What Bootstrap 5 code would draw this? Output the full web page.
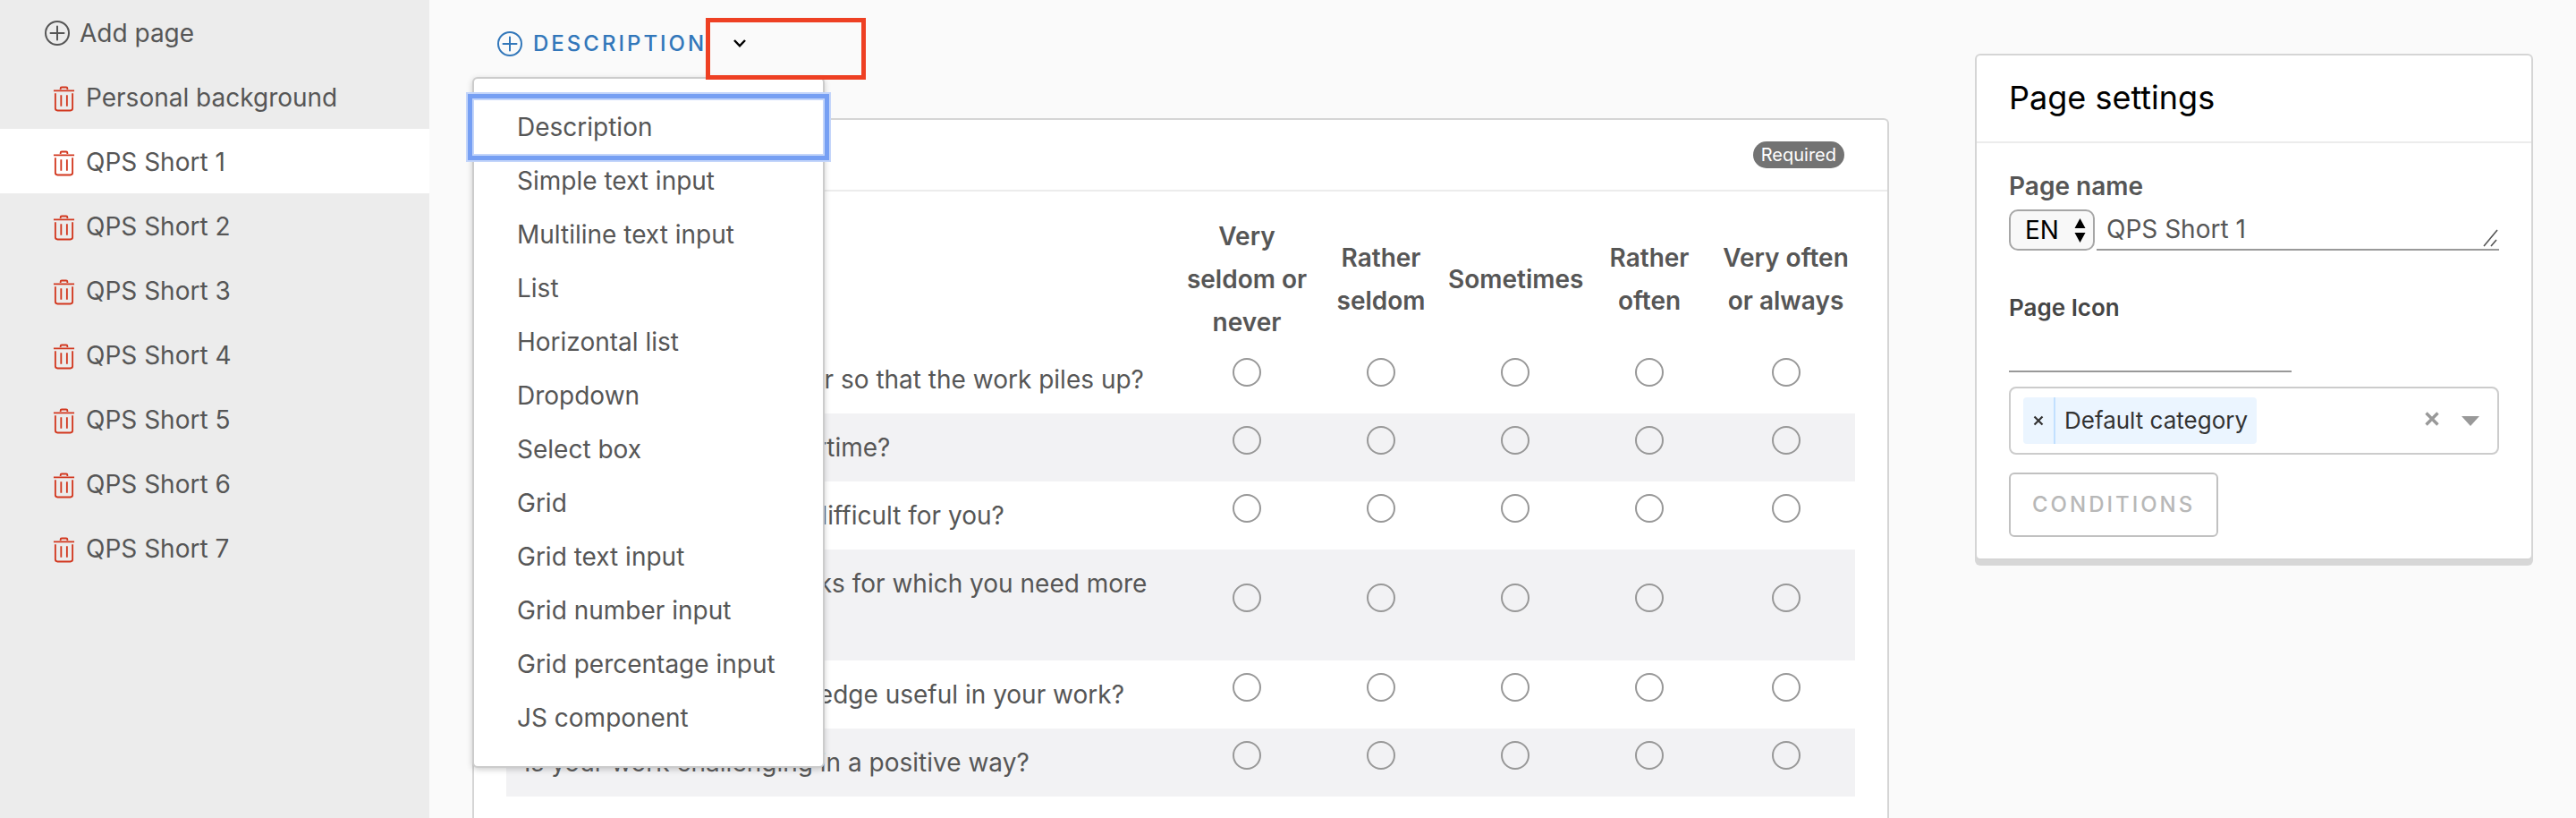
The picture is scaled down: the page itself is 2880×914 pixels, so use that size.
<!DOCTYPE html>
<html lang="en">
<head>
<meta charset="utf-8">
<meta name="viewport" content="width=device-width, initial-scale=1">
<title>Survey editor</title>
<link rel="stylesheet" href="https://cdn.jsdelivr.net/npm/bootstrap@5.3.0/dist/css/bootstrap.min.css">
<style>
  body { font-family: Inter, "Liberation Sans", sans-serif; font-size: 28px; line-height: 48px; color: #565656; background: #fafafa; }
  .app-shell { min-height: 100vh; }
  .page-nav { background: #ececec; }
  .nav-row { height: 72px; gap: 12px; padding-left: 59px; padding-top: 2px; color: #565656; text-decoration: none; }
  .nav-row.add-row { gap: 11px; padding-left: 50px; background: none; }
  .nav-row.active { background: #fff; }
  .trash-btn { color: #d2371e; margin-top: 2px; line-height: 0; }
  .work-area { flex: 1 1 0; min-width: 0; padding: 0 48px; gap: 96px; }
  .editor-col { flex: 1584 1 0; min-width: 0; }
  .settings-col { flex: 624 1 0; min-width: 0; padding-top: 60px; }
  .add-bar { height: 132px; padding: 25px 28px 0; }
  .add-btn { color: #3277ba; font-size: 24px; font-weight: 500; letter-spacing: 3px; line-height: 48px; gap: 12px; }
  .chev-btn { margin-left: 29px; line-height: 0; color: #000; }
  .mark-box { left: 261px; top: 20px; width: 179px; height: 69px; border: 5px solid #ee4023; z-index: 30; }
  .type-menu { top: 86px; left: 0; width: 394px; padding: 24px 0; border: 2px solid #ccc; border-radius: 6px; background: #fff; box-shadow: 0 2px 6px rgba(90,90,90,.3); z-index: 20; }
  .type-item { height: 60px; padding: 0 48px; color: #565656; line-height: 60px; font-size: 28px; }
  .type-item.is-focused { position: relative; border-radius: 2px; box-shadow: 0 0 0 2px #c3d5fa, 0 0 0 7px #769ff3, 0 0 0 9px #c3d5fa; }
  .panel { background: #fff; border: 2px solid #d5d5d5; border-radius: 6px; }
  .q-panel { border-bottom: 0; border-radius: 6px 6px 0 0; }
  .q-head { height: 80px; padding: 0 48px; border-bottom: 2px solid #ececec; }
  .req-pill { background: #737373; color: #fff; font-size: 20px; line-height: 30px; border-radius: 15px; padding: 0 9px; }
  .q-body { padding: 24px 36px; }
  .q-table { width: 100%; table-layout: fixed; }
  .q-table th, .q-table td { padding: 14px 0 14px 20px; vertical-align: middle; font-weight: 400; }
  .q-table thead th { padding: 2px 0; text-align: center; font-weight: 600; }
  .q-table tbody tr:nth-child(even) { background: #f2f2f4; }
  .q-table td { padding: 0 0 16px; text-align: center; line-height: 0; }
  .opt-col { width: 150px; }
  .opt-col-last { width: 155px; }
  .opt { appearance: none; width: 32px; height: 32px; margin: 0; border: 2px solid #989898; border-radius: 50%; background: #fff; vertical-align: top; }
  tr:nth-child(even) .opt { background: transparent; }
  .s-panel { box-shadow: 0 6px 0 #d7d7d7; }
  .s-head { height: 98px; padding: 0 36px; border-bottom: 2px solid #ececec; color: #000; font-size: 36px; font-weight: 400; }
  .s-body { padding: 24px 36px; }
  .lbl { font-weight: 600; }
  .name-row { margin-top: 2px; }
  .lbl-icon { font-size: 26px; color: #454545; margin-top: 40px; }
  .lang-wrap { width: 96px; margin-right: 2px; }
  .lang-select { appearance: none; width: 100%; height: 46px; border: 2px solid #a6a6a6; border-radius: 10px; background: #f8f8f8; color: #000; padding: 0 0 0 16px; line-height: 42px; }
  .lang-arrows { right: 10px; top: 10px; pointer-events: none; }
  .name-area { flex: 1 1 0; min-width: 0; height: 46px; border: 0; border-bottom: 2px solid #999; padding: 0 11px; line-height: 44px; color: #565656; background: transparent; resize: none; overflow: hidden; }
  .grip { right: 0; bottom: 4px; pointer-events: none; }
  .icon-input { width: 316px; height: 48px; border: 0; border-bottom: 2px solid #999; background: transparent; }
  .cat-box { height: 76px; margin-top: 16px; padding: 0 20px 0 14px; border: 2px solid #ccc; border-radius: 8px; }
  .cat-tag { height: 52px; background: #ebf5ff; border-radius: 4px; color: #333; font-size: 26px; line-height: 52px; }
  .cat-x { width: 36px; border-right: 2px solid #c2e0ff; line-height: 0; color: #333; }
  .cat-name { padding: 0 10px; }
  .cond-btn { margin-top: 20px; height: 72px; padding: 0 24px; border: 2px solid #c1c1c1; border-radius: 6px; background: #fff; color: #b8b8b8; font-size: 24px; font-weight: 500; letter-spacing: 3px; line-height: 64px; }
</style>
</head>
<body>
<svg class="d-none" aria-hidden="true">
  <symbol id="plus" viewBox="0 0 28 28"><g fill="none" stroke="currentColor" stroke-width="2"><circle cx="14" cy="14" r="13"/><path d="M14 6.500v15M6.500 14h15" stroke-linecap="round"/></g></symbol>
  <symbol id="trash" viewBox="0 0 26 30"><g fill="none" stroke="currentColor" stroke-width="2"><path d="M1 6h24M9 4.500V3.400Q9 2 10.400 2h5.200Q17 2 17 3.400v1.100M3 9v17.500q0 2.500 2.500 2.500h15q2.500 0 2.500-2.500V9M9.700 11v13M16.500 11v13" stroke-width="1.900"/></g></symbol>
</svg>
<div class="app-shell d-flex">
  <nav class="page-nav col-2 flex-shrink-0" aria-label="Pages">
    <a href="#" class="nav-row add-row d-flex align-items-center"><svg width="28" height="28"><use href="#plus"/></svg>Add page</a>
    <div id="pages"></div>
  </nav>

  <main class="work-area d-flex">
    <section class="editor-col position-relative d-flex flex-column">
      <div class="add-bar d-flex align-items-start">
        <button type="button" class="add-btn btn p-0 border-0 d-flex align-items-center"><svg width="28" height="28"><use href="#plus"/></svg>DESCRIPTION</button>
        <button type="button" class="chev-btn btn p-0 border-0 align-self-start mt-3" aria-label="Choose type"><svg width="16" height="14" viewBox="0 0 16 14" fill="none" stroke="#000" stroke-width="2.500"><path d="M2 4l6 6.300L14 4"/></svg></button>
      </div>
      <div class="mark-box position-absolute"></div>
      <div class="type-menu position-absolute" role="menu" id="types"></div>

      <article class="panel q-panel flex-grow-1">
        <header class="q-head d-flex align-items-center justify-content-end"><span class="req-pill">Required</span></header>
        <div class="q-body">
          <table class="q-table">
            <colgroup><col><col class="opt-col"><col class="opt-col"><col class="opt-col"><col class="opt-col"><col class="opt-col-last"></colgroup>
            <thead><tr><th></th><th scope="col">Very seldom or never</th><th scope="col">Rather seldom</th><th scope="col">Sometimes</th><th scope="col">Rather often</th><th scope="col">Very often or always</th></tr></thead>
            <tbody id="questions"></tbody>
          </table>
        </div>
      </article>
    </section>

    <aside class="settings-col">
      <div class="panel s-panel">
        <h2 class="s-head d-flex align-items-center m-0">Page settings</h2>
        <div class="s-body">
          <label class="lbl d-block" for="pname">Page name</label>
          <div class="name-row d-flex position-relative">
            <div class="lang-wrap position-relative">
              <select class="lang-select d-block" aria-label="Language"><option>EN</option></select>
              <svg class="lang-arrows position-absolute" width="13" height="28" viewBox="0 0 13 28"><path d="M6.500 0L12.500 11H.5zM6.500 27L.5 16h12z"/></svg>
            </div>
            <textarea class="name-area" id="pname" rows="1">QPS Short 1</textarea>
            <svg class="grip position-absolute" width="18" height="20" viewBox="0 0 18 20" stroke="#555" stroke-width="1.600"><path d="M1 19L16 1M9 19l6-7"/></svg>
          </div>
          <label class="lbl lbl-icon d-block" for="picon">Page Icon</label>
          <input class="icon-input d-block" type="text" id="picon">
          <div class="cat-box d-flex align-items-center">
            <div class="cat-tag d-flex">
              <button type="button" class="cat-x btn p-0 border-top-0 border-bottom-0 border-start-0 rounded-0" aria-label="Remove category"><svg width="12" height="14" viewBox="0 0 12 14" stroke="#333" stroke-width="2.200"><path d="M1.500 2.500l9 9M10.500 2.500l-9 9"/></svg></button>
              <span class="cat-name">Default category</span>
            </div>
            <button type="button" class="btn p-0 border-0 ms-auto me-4 lh-1 d-flex" aria-label="Clear"><svg width="18" height="24" viewBox="0 0 18 24" stroke="#999" stroke-width="3.400"><path d="M2.500 3.500l13 13M15.500 3.500l-13 13"/></svg></button>
            <svg width="20" height="12" viewBox="0 0 20 12" fill="#999"><path d="M0 1h20L10 12z"/></svg>
          </div>
          <button type="button" class="cond-btn d-block" disabled>CONDITIONS</button>
        </div>
      </div>
    </aside>
  </main>
</div>
<script src="https://cdn.jsdelivr.net/npm/bootstrap@5.3.0/dist/js/bootstrap.bundle.min.js"></script>
<script>
  const pages = ["Personal background", ...[1, 2, 3, 4, 5, 6, 7].map(n => "QPS Short " + n)];
  document.getElementById("pages").innerHTML = pages.map((p, i) =>
    `<div class="nav-row d-flex align-items-center${i === 1 ? " active" : ""}"><button type="button" class="trash-btn btn p-0 border-0" aria-label="Delete ${p}"><svg width="25" height="30"><use href="#trash"/></svg></button><a href="#" class="text-reset text-decoration-none">${p}</a></div>`).join("");

  const types = ["Description", "Simple text input", "Multiline text input", "List", "Horizontal list", "Dropdown", "Select box", "Grid", "Grid text input", "Grid number input", "Grid percentage input", "JS component"];
  document.getElementById("types").innerHTML = types.map((t, i) =>
    `<button type="button" role="menuitem" class="type-item btn border-0 rounded-0 d-block w-100 text-start py-0${i ? "" : " is-focused"}">${t}</button>`).join("");

  const questions = [
    "Is your work load irregular so that the work piles up?",
    "Do you have to work overtime?",
    "Are your work tasks too difficult for you?",
    "Do you perform work tasks for which you need more training?",
    "Are your skills and knowledge useful in your work?",
    "Is your work challenging in a positive way?"];
  document.getElementById("questions").innerHTML = questions.map((q, i) =>
    `<tr><th scope="row">${q}</th>${[1, 2, 3, 4, 5].map(n => `<td><input class="opt" type="radio" name="q${i}" value="${n}" aria-label="${q} ${n}"></td>`).join("")}</tr>`).join("");
</script>
</body>
</html>
